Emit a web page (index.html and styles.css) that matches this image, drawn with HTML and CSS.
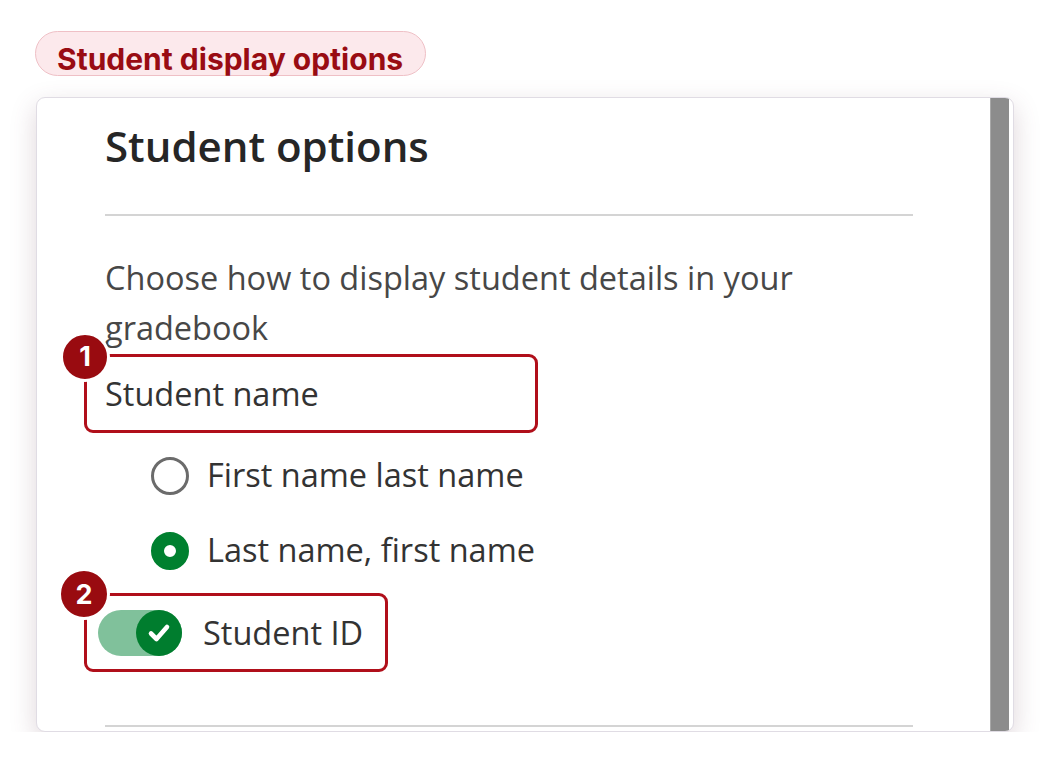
FILE: index.html
```html
<!DOCTYPE html>
<html lang="en">
<head>
<meta charset="utf-8">
<title>Student display options</title>
<link rel="stylesheet" href="styles.css">
</head>
<body>
<div class="page">
  <div class="pill">Student display options</div>
  <div class="card">
    <div class="content">
      <h2 class="title">Student options</h2>
      <hr class="divider">
      <p class="desc">Choose how to display student details in your gradebook</p>
      <div class="callout callout-name">
        <span class="badge">1</span>
        <span class="label">Student name</span>
      </div>
      <div class="radios">
        <div class="radio-row">
          <span class="radio"></span>
          <span class="radio-label">First name last name</span>
        </div>
        <div class="radio-row">
          <span class="radio radio-on"></span>
          <span class="radio-label">Last name, first name</span>
        </div>
      </div>
      <div class="callout callout-id">
        <span class="badge">2</span>
        <span class="toggle">
          <span class="knob">
            <svg class="check" width="28" height="28" viewBox="0 0 28 28"><path d="M6 14.5 L11.5 20 L22 8" fill="none" stroke="#fff" stroke-width="4.6" stroke-linecap="round" stroke-linejoin="round"/></svg>
          </span>
        </span>
        <span class="label">Student ID</span>
      </div>
      <hr class="divider divider-bottom">
    </div>
    <div class="scrollbar"></div>
  </div>
</div>
</body>
</html>
```
FILE: styles.css
```css
html, body {
  margin: 0;
  padding: 0;
  background: #ffffff;
}
.page {
  padding: 31px 0 0 35px;
  font-family: "Open Sans", "Liberation Sans", sans-serif;
}
.pill {
  display: inline-flex;
  align-items: center;
  box-sizing: border-box;
  height: 45px;
  padding: 11px 22px 0 21px;
  border: 1.5px solid #efc0c6;
  border-radius: 23px;
  background: #fce9ec;
  color: #990c13;
  font-family: Inter, "Liberation Sans", sans-serif;
  font-weight: 700;
  font-size: 30px;
  line-height: 34px;
}
.card {
  margin-top: 21px;
  margin-left: 1px;
  width: 978px;
  height: 635px;
  box-sizing: border-box;
  border: 1px solid #e0dce4;
  border-radius: 9px;
  background: #ffffff;
  box-shadow: 0 9px 26px rgba(110, 70, 85, 0.22);
  display: flex;
  overflow: hidden;
}
.content {
  flex: 1;
  padding: 23px 0 0 68px;
  min-width: 0;
}
.title {
  margin: 0;
  font-size: 42px;
  line-height: 50px;
  font-weight: 600;
  color: #262626;
}
.divider {
  margin: 43px 0 0 0;
  width: 808px;
  height: 2px;
  border: none;
  background: #d4d4d4;
}
.desc {
  margin: 37px 0 0 0;
  width: 808px;
  font-size: 32.5px;
  line-height: 50px;
  color: #474747;
}
.callout {
  position: relative;
  box-sizing: border-box;
  height: 79px;
  margin-left: -21px;
  border: 3px solid #b00f1a;
  border-radius: 9px;
  display: flex;
  align-items: center;
}
.callout-name {
  width: 454px;
  margin-top: 0.5px;
  padding: 2px 0 0 18px;
}
.callout-id {
  width: 304px;
  margin-top: 18.5px;
  padding: 1px 0 0 11px;
}
.label {
  font-size: 32.5px;
  line-height: 50px;
  color: #333333;
}
.badge {
  position: absolute;
  left: -27px;
  top: -25px;
  width: 44px;
  height: 44px;
  border-radius: 50%;
  background: #990b10;
  border: 3px solid #ffffff;
  color: #ffffff;
  font-family: Inter, "Liberation Sans", sans-serif;
  font-weight: 700;
  font-size: 27px;
  display: flex;
  align-items: center;
  justify-content: center;
}
.callout-id .badge {
  left: -29px;
  top: -28px;
  width: 46px;
  height: 46px;
}
.radios {
  margin: 17px 0 0 46px;
  display: flex;
  flex-direction: column;
  gap: 25px;
}
.radio-row {
  display: flex;
  align-items: center;
  height: 50px;
  gap: 18px;
}
.radio {
  box-sizing: border-box;
  width: 38px;
  height: 38px;
  border-radius: 50%;
  border: 3px solid #6b6b6b;
  background: #ffffff;
  margin-top: 3px;
}
.radio-on {
  border: 13px solid #00802f;
  background: #ffffff;
}
.radio-label {
  font-size: 32.5px;
  line-height: 50px;
  color: #333333;
}
.toggle {
  position: relative;
  width: 84px;
  height: 46px;
  border-radius: 23px;
  background: #80c19b;
  margin-right: 21px;
  flex: none;
}
.knob {
  position: absolute;
  right: 0;
  top: 0;
  width: 46px;
  height: 46px;
  border-radius: 50%;
  background: #007d2e;
  display: flex;
  align-items: center;
  justify-content: center;
}
.check {
  flex: none;
}
.divider-bottom {
  margin-top: 53px;
}
.scrollbar {
  flex: none;
  width: 18px;
  margin-right: 4px;
  background: #8c8c8c;
  border-left: 1px solid #a8a8a8;
}
```
